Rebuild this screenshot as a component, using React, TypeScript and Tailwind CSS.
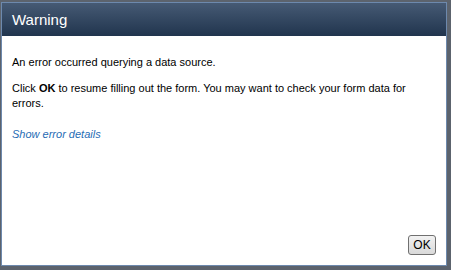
export default function App() {
  return (
    <div className="w-[451px] h-[270px] bg-[#5c636d] pt-[2px] pl-[1px] pr-[4px] pb-[4px]" style={{ fontFamily: '"Liberation Sans", Arial, sans-serif' }}>
      <div className="flex flex-col h-full border border-[#6d89ad] bg-white">
        <div className="h-[33px] shrink-0 flex items-center px-[10px] bg-gradient-to-b from-[#465a74] to-[#21354e]">
          <span className="text-white text-[15px] leading-none">Warning</span>
        </div>
        <div className="flex-1 flex flex-col px-[10px] pt-[19px] pb-[10px] text-[11px] leading-[15px] text-black">
          <p>An error occurred querying a data source.</p>
          <p className="mt-[11px] pr-[20px]">
            Click <b>OK</b> to resume filling out the form. You may want to check your form data for errors.
          </p>
          <a className="mt-[16px] italic text-[#1f6cb4] w-max">Show error details</a>
          <div className="flex-1" />
          <div className="flex justify-end">
            <button className="w-[28px] h-[20px] rounded-[3px] border border-[#707070] bg-gradient-to-b from-[#f2f2f2] to-[#d9d9d9] text-[12px] leading-none text-black">
              OK
            </button>
          </div>
        </div>
      </div>
    </div>
  )
}
